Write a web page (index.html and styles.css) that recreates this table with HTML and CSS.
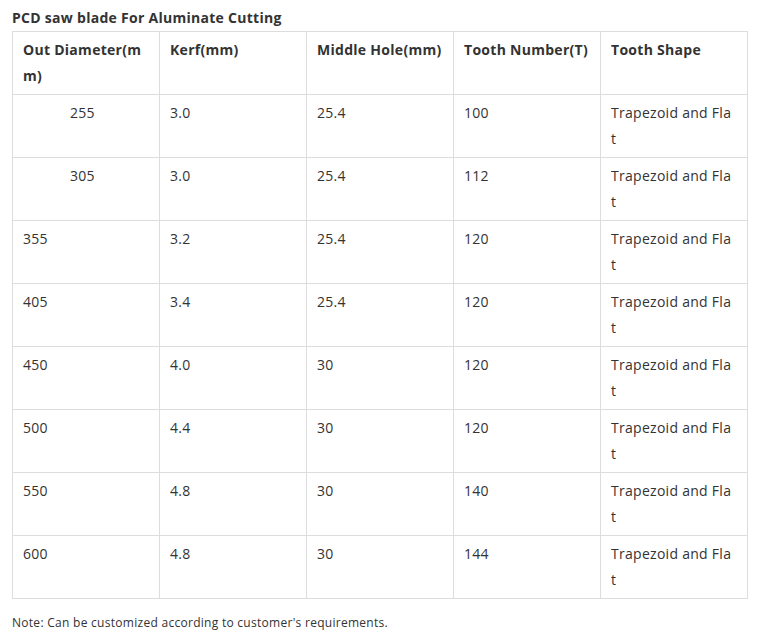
FILE: index.html
```html
<!DOCTYPE html>
<html>
<head>
<meta charset="utf-8">
<link rel="stylesheet" href="styles.css">
</head>
<body>
<div class="page">
  <h3 class="title">PCD saw blade For Aluminate Cutting</h3>
  <table class="spec">
    <colgroup>
      <col class="c"><col class="c"><col class="c"><col class="c"><col>
    </colgroup>
    <thead>
      <tr>
        <th>Out Diameter(mm)</th>
        <th>Kerf(mm)</th>
        <th>Middle Hole(mm)</th>
        <th>Tooth Number(T)</th>
        <th class="last">Tooth Shape</th>
      </tr>
    </thead>
    <tbody>
      <tr><td class="indent">255</td><td>3.0</td><td>25.4</td><td>100</td><td class="last">Trapezoid and Flat</td></tr>
      <tr><td class="indent">305</td><td>3.0</td><td>25.4</td><td>112</td><td class="last">Trapezoid and Flat</td></tr>
      <tr><td>355</td><td>3.2</td><td>25.4</td><td>120</td><td class="last">Trapezoid and Flat</td></tr>
      <tr><td>405</td><td>3.4</td><td>25.4</td><td>120</td><td class="last">Trapezoid and Flat</td></tr>
      <tr><td>450</td><td>4.0</td><td>30</td><td>120</td><td class="last">Trapezoid and Flat</td></tr>
      <tr><td>500</td><td>4.4</td><td>30</td><td>120</td><td class="last">Trapezoid and Flat</td></tr>
      <tr><td>550</td><td>4.8</td><td>30</td><td>140</td><td class="last">Trapezoid and Flat</td></tr>
      <tr><td>600</td><td>4.8</td><td>30</td><td>144</td><td class="last">Trapezoid and Flat</td></tr>
    </tbody>
  </table>
  <p class="note">Note: Can be customized according to customer's requirements.</p>
</div>
</body>
</html>
```
FILE: styles.css
```css
html, body {
  margin: 0;
  padding: 0;
  background: #fff;
}
body {
  font-family: "Open Sans", "Liberation Sans", sans-serif;
  color: #333;
  font-size: 14px;
  letter-spacing: 0.28px;
}
.page {
  padding: 6px 12px 0 12px;
}
.title {
  margin: 0;
  font-size: 14px;
  font-weight: 700;
  line-height: 24px;
  color: #333;
}
.spec {
  margin-top: 1px;
  border-collapse: collapse;
  table-layout: fixed;
  width: 736px;
}
.spec col.c {
  width: 147px;
}
.spec th, .spec td {
  border: 1px solid #ddd;
  padding: 5px 10px;
  line-height: 26px;
  text-align: left;
  vertical-align: top;
  height: 52px;
  box-sizing: content-box;
  word-break: break-all;
  font-size: 14px;
}
.spec th {
  font-weight: 700;
}
.spec td.indent {
  padding-left: 57px;
}
.spec .last {
  padding-right: 13px;
}
.note {
  margin: 14px 0 0 0;
  font-size: 12px;
  line-height: 20px;
  color: #333;
}
```
